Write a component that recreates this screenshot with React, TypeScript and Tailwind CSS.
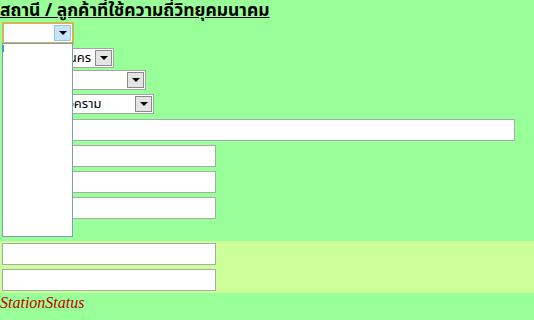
import React from 'react';

const Arrow = ({ hot }: { hot?: boolean }) => (
  <div
    className={`flex h-full w-[17px] shrink-0 items-center justify-center border ${
      hot ? 'border-[#9cc3e6] bg-[#c8e4fb]' : 'border-[#8a8a8a] bg-[#e4e4e4]'
    }`}
  >
    <svg width="8" height="4" viewBox="0 0 8 4">
      <polygon points="0,0 8,0 4,4" fill="#000" />
    </svg>
  </div>
);

const Select = ({ w, text, hot }: { w: string; text?: string; hot?: boolean }) => (
  <div
    className={`flex items-center bg-white p-px ${w} ${
      hot ? 'h-[22px] border-2 border-[#d2b450]' : 'h-[20px] border border-[#a5a5a5]'
    }`}
  >
    <div className="flex-1 overflow-hidden whitespace-nowrap pl-[2px] text-[13px] leading-[16px]">{text}</div>
    <Arrow hot={hot} />
  </div>
);

const Field = ({ w }: { w: string }) => (
  <div className={`h-[22px] border border-[#a8aca8] bg-white ${w}`} />
);

const Row = ({ label, w }: { label: string; w: string }) => (
  <div className="flex h-[26px] items-start">
    <div className="w-[70px] pl-[6px] text-[13px] leading-[20px]">{label}</div>
    <Field w={w} />
  </div>
);

export default function App() {
  return (
    <div
      className="relative h-[320px] w-[534px] overflow-hidden bg-[#99ff99] text-black"
      style={{ fontFamily: 'Tahoma, "Noto Sans Thai", "Noto Sans", sans-serif' }}
    >
      <div className="h-[22px] whitespace-nowrap text-[17.5px] font-bold leading-[21px] underline">
        สถานี / ลูกค้าที่ใช้ความถี่วิทยุคมนาคม
      </div>

      <div className="flex h-[26px] pl-[2px]">
        <Select w="w-[72px]" hot />
      </div>

      <div className="flex flex-col pl-[2px]">
        <div className="h-[22px]">
          <Select w="w-[112px]" text="กรุงเทพมหานคร" />
        </div>
        <div className="h-[24px]">
          <Select w="w-[144px]" />
        </div>
        <div className="h-[25px]">
          <Select w="w-[152px]" text="อำเภอบ้านทุ่งคราม" />
        </div>
      </div>

      <div className="flex flex-col">
        <Row label="ชื่อ" w="w-[445px]" />
        <Row label="ที่อยู่" w="w-[146px]" />
        <Row label="โทร" w="w-[146px]" />
        <Row label="อีเมล" w="w-[146px]" />
      </div>

      <div className="h-[18px] pl-[6px] text-[13px] leading-[14px]">หมายเหตุ</div>

      <div className="flex h-[52px] flex-col gap-[4px] bg-[#ccff99] pl-[2px] pt-[2px]">
        <Field w="w-[214px]" />
        <Field w="w-[214px]" />
      </div>

      <div
        className="text-[16px] italic leading-[20px] text-[#c40000]"
        style={{ fontFamily: '"Liberation Serif", serif' }}
      >
        StationStatus
      </div>

      <div className="absolute left-[2px] top-[43px] h-[194px] w-[71px] border border-[#7f9db9] bg-white">
        <div className="absolute left-[-1px] top-[1px] h-[7px] w-[2px] bg-[#4a90d9]" />
      </div>
    </div>
  );
}
